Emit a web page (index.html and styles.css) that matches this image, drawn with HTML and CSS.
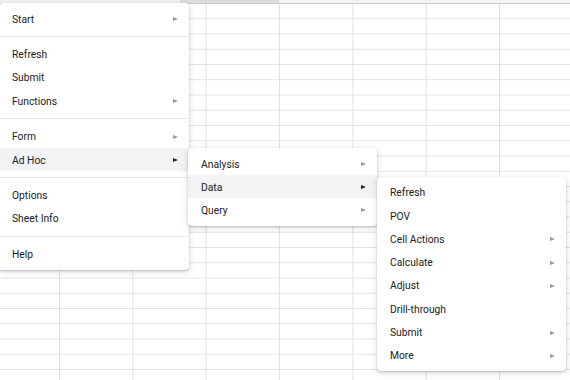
FILE: index.html
```html
<!DOCTYPE html>
<html lang="en">

<head>
	<meta charset="UTF-8">
	<title>Smart View menu</title>
	<link rel="stylesheet" href="styles.css">
</head>

<body>
	<div class="sheet">
		<div class="colhead"><span class="colsel"></span></div>
	</div>

	<!-- 主菜单 -->
	<div class="menu main">
		<div class="item">Start<i class="arrow"></i></div>
		<div class="sep"></div>
		<div class="item">Refresh</div>
		<div class="item">Submit</div>
		<div class="item">Functions<i class="arrow"></i></div>
		<div class="sep"></div>
		<div class="item">Form<i class="arrow"></i></div>
		<div class="item open">Ad Hoc<i class="arrow"></i>
			<!-- 子菜单 -->
			<div class="menu sub">
				<div class="item">Analysis<i class="arrow"></i></div>
				<div class="item open">Data<i class="arrow"></i>
					<div class="menu sub">
						<div class="item">Refresh</div>
						<div class="item">POV</div>
						<div class="item">Cell Actions<i class="arrow"></i></div>
						<div class="item">Calculate<i class="arrow"></i></div>
						<div class="item">Adjust<i class="arrow"></i></div>
						<div class="item">Drill-through</div>
						<div class="item">Submit<i class="arrow"></i></div>
						<div class="item">More<i class="arrow"></i></div>
					</div>
				</div>
				<div class="item">Query<i class="arrow"></i></div>
			</div>
		</div>
		<div class="sep"></div>
		<div class="item">Options</div>
		<div class="item">Sheet Info</div>
		<div class="sep"></div>
		<div class="item">Help</div>
	</div>
</body>

</html>
```

FILE: styles.css
```css
html,
body {
	margin: 0;
	padding: 0;
}

body {
	width: 570px;
	height: 380px;
	overflow: hidden;
	position: relative;
	background: #fff;
	font-family: Roboto, "Liberation Sans", sans-serif;
}

/* 表格背景 */
.sheet {
	height: 100%;
	background-image:
		linear-gradient(to right, #e2e2e2 1px, transparent 1px),
		linear-gradient(to bottom, #e2e2e2 1px, transparent 1px);
	background-size: 73.33px 100%, 100% 15.25px;
	background-position: 59px 0, 0 3px;
}

.colhead {
	height: 3px;
	background: #f3f3f3;
	border-bottom: 1px solid #cfcfcf;
	position: relative;
}

.colsel {
	position: absolute;
	left: 180px;
	width: 99px;
	top: 0;
	bottom: 0;
	background: #dcdcdc;
}

/* 菜单 */
.menu {
	position: absolute;
	width: 189px;
	padding: 4px 0;
	background: #fff;
	border-radius: 4px;
	box-shadow: 0 1px 2px rgba(60, 64, 67, .28), 0 2px 6px 1px rgba(60, 64, 67, .13);
	box-sizing: border-box;
}

.main {
	left: -1px;
	top: 3px;
	width: 190px;
}

.sub {
	left: calc(100% - 1px);
	top: 0;
}

.sub .sub {
	left: 100%;
	top: 1.5px;
}

.item {
	position: relative;
	display: flex;
	align-items: center;
	justify-content: space-between;
	height: 23.2px;
	padding: 1px 11px 0 13px;
	box-sizing: border-box;
	font-size: 10.3px;
	color: #202124;
}

.sub .sub .item {
	height: 23.3px;
}

.open {
	background: #f1f3f4;
}

.sub .item {
	background: transparent;
}

.sub .open {
	background: #f1f3f4;
}

.sep {
	height: 1px;
	margin: 5.5px 0 6px;
	background: #e8e8e8;
}

.arrow {
	width: 0;
	height: 0;
	border-left: 5px solid #999;
	border-top: 2.5px solid transparent;
	border-bottom: 2.5px solid transparent;
}

.open > .arrow {
	border-left-color: #202124;
}

.sub .item > .arrow {
	border-left-color: #999;
}

.sub .open > .arrow {
	border-left-color: #202124;
}
```
